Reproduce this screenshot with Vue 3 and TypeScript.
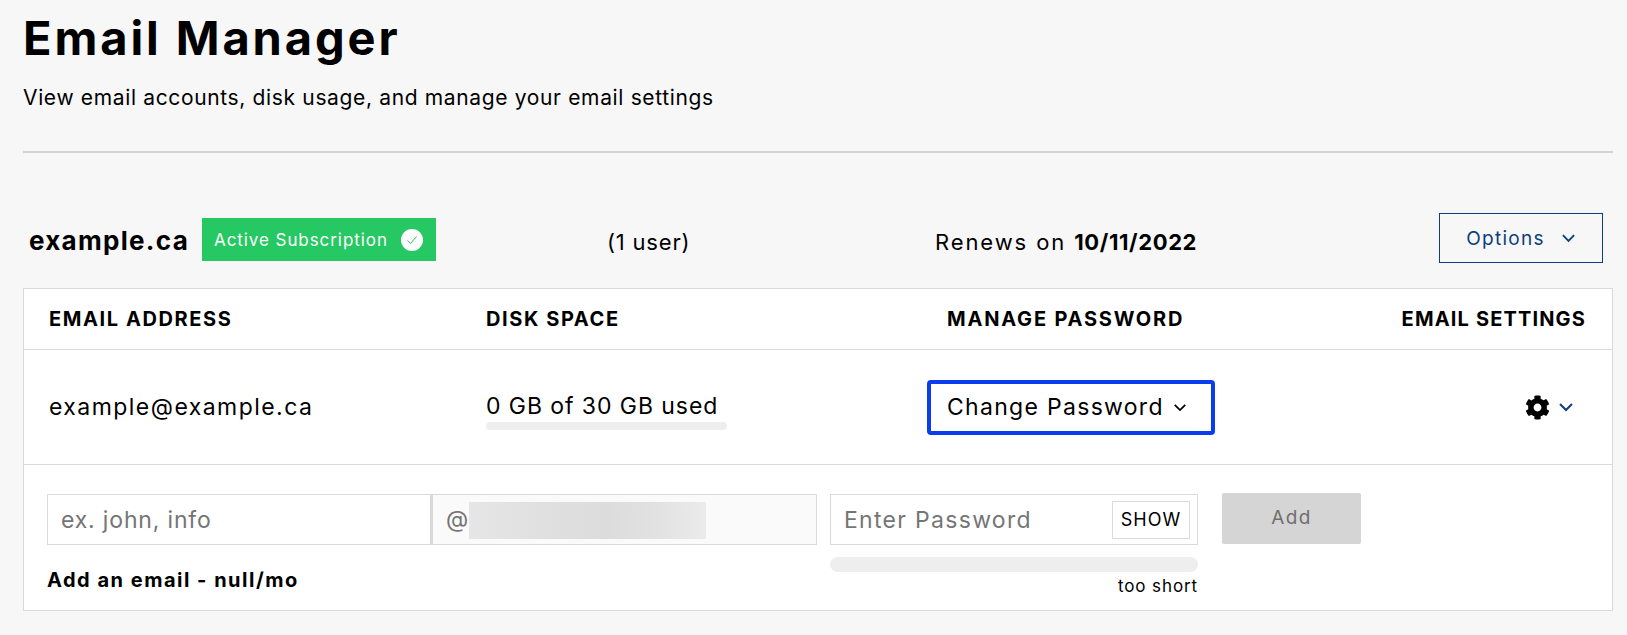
<script setup lang="ts">
const headers: string[] = ['EMAIL ADDRESS', 'DISK SPACE', 'MANAGE PASSWORD', 'EMAIL SETTINGS']
const cogPath =
  'M487.4 315.7l-42.6-24.6c4.3-23.2 4.3-47 0-70.2l42.6-24.6c4.9-2.8 7.1-8.6 5.5-14-11.1-35.6-30-67.8-54.7-94.6-3.8-4.1-10-5.1-14.8-2.3L380.8 110c-17.9-15.4-38.5-27.3-60.8-35.1V25.8c0-5.6-3.9-10.5-9.4-11.7-36.7-8.2-74.3-7.8-109.2 0-5.5 1.2-9.4 6.1-9.4 11.7V75c-22.2 7.9-42.8 19.8-60.8 35.1L88.7 85.5c-4.9-2.8-11-1.9-14.8 2.3-24.7 26.7-43.6 58.9-54.7 94.6-1.7 5.4.6 11.2 5.5 14L67.3 221c-4.3 23.2-4.3 47 0 70.2l-42.6 24.6c-4.9 2.8-7.1 8.6-5.5 14 11.1 35.6 30 67.8 54.7 94.6 3.8 4.1 10 5.1 14.8 2.3l42.6-24.6c17.9 15.4 38.5 27.3 60.8 35.1v49.2c0 5.6 3.9 10.5 9.4 11.7 36.7 8.2 74.3 7.8 109.2 0 5.5-1.2 9.4-6.1 9.4-11.7v-49.2c22.2-7.9 42.8-19.8 60.8-35.1l42.6 24.6c4.9 2.8 11 1.9 14.8-2.3 24.7-26.7 43.6-58.9 54.7-94.6 1.5-5.5-.7-11.3-5.6-14.1zM256 336c-44.1 0-80-35.9-80-80s35.9-80 80-80 80 35.9 80 80-35.9 80-80 80z'
</script>

<template>
  <main class="page">
    <h1 class="title">Email Manager</h1>
    <p class="subtitle">View email accounts, disk usage, and manage your email settings</p>
    <hr class="rule" />

    <section class="summary">
      <div class="domain">
        <strong class="domain-name">example.ca</strong>
        <span class="badge">
          Active Subscription
          <svg class="badge-check" viewBox="0 0 22 22" aria-hidden="true">
            <circle cx="11" cy="11" r="11" fill="#fff" />
            <path d="M6.5 11.5l3 3 6-7" fill="none" stroke="#22c55e" stroke-width="1" />
          </svg>
        </span>
      </div>
      <span class="users">(1 user)</span>
      <span class="renews">Renews on <b>10/11/2022</b></span>
      <button class="options" type="button">
        Options
        <svg class="chev" viewBox="0 0 16 10" aria-hidden="true">
          <path d="M2 2l6 6 6-6" fill="none" stroke="currentColor" stroke-width="2" />
        </svg>
      </button>
    </section>

    <section class="table">
      <div class="grid head">
        <span v-for="h in headers" :key="h" class="th">{{ h }}</span>
      </div>
      <div class="grid row">
        <span class="cell email">example@example.ca</span>
        <div class="usage">
          <span class="cell">0 GB of 30 GB used</span>
          <span class="usage-bar"></span>
        </div>
        <button class="change" type="button">
          Change Password
          <svg class="chev-small" viewBox="0 0 16 10" aria-hidden="true">
            <path d="M2 2l6 6 6-6" fill="none" stroke="currentColor" stroke-width="2" />
          </svg>
        </button>
        <div class="settings">
          <svg class="cog" viewBox="0 0 512 512" aria-hidden="true"><path :d="cogPath" /></svg>
          <svg class="chev-blue" viewBox="0 0 16 10" aria-hidden="true">
            <path d="M2 2l6 6 6-6" fill="none" stroke="currentColor" stroke-width="2" />
          </svg>
        </div>
      </div>
      <div class="add">
        <div class="add-email">
          <div class="address">
            <input class="local" type="text" placeholder="ex. john, info" />
            <div class="at">@<span class="blur"></span></div>
          </div>
          <strong class="add-label">Add an email - null/mo</strong>
        </div>
        <div class="password">
          <div class="pass-box">
            <input class="pass-input" type="text" placeholder="Enter Password" />
            <button class="show" type="button">SHOW</button>
          </div>
          <div class="strength"></div>
          <small class="hint">too short</small>
        </div>
        <button class="add-btn" type="button">Add</button>
      </div>
    </section>
  </main>
</template>

<style>
html, body { margin: 0; background: #f7f7f7; }
</style>

<style scoped>
.page {
  box-sizing: border-box;
  width: 1627px;
  height: 635px;
  overflow: hidden;
  padding: 0 14px 0 23px;
  background: #f7f7f7;
  color: #000;
  font-family: Inter, "Open Sans", sans-serif;
}
.title {
  margin: 0;
  padding-top: 11px;
  height: 63px;
  box-sizing: border-box;
  font-size: 47px;
  line-height: 54px;
  font-weight: 700;
  letter-spacing: 2.9px;
}
.subtitle {
  margin: 22px 0 0;
  font-size: 21px;
  line-height: 26px;
  letter-spacing: 0.65px;
}
.rule {
  margin: 40px 0 0;
  border: 0;
  height: 2px;
  background: #d2d2d2;
}
.summary {
  display: grid;
  grid-template-columns: 585px 327px 1fr auto;
  align-items: center;
  height: 50px;
  margin: 60px 10px 0 0;
}
.domain { display: flex; align-items: center; padding-left: 6px; height: 100%; }
.domain-name { font-size: 26px; font-weight: 700; width: 167px; flex: none; padding-top: 5px; letter-spacing: 1.3px; }
.badge {
  display: flex;
  align-items: center;
  justify-content: space-between;
  box-sizing: border-box;
  width: 234px;
  height: 43px;
  margin: 3px 0 0 6px;
  padding: 0 13px 0 12px;
  background: #25c862;
  color: #fff;
  font-size: 17px;
  letter-spacing: 0.93px;
}
.badge-check { width: 22px; height: 22px; }
.users, .renews { font-size: 22px; padding-top: 8px; }
.users { letter-spacing: 0.8px; margin-left: -1px; }
.renews { letter-spacing: 1.9px; }
.renews b { font-weight: 700; letter-spacing: 0.6px; }
.options {
  display: flex;
  align-items: center;
  justify-content: center;
  gap: 16px;
  box-sizing: border-box;
  width: 164px;
  height: 50px;
  background: transparent;
  border: 1px solid #0f3d7e;
  color: #0f3d7e;
  font: inherit;
  font-size: 19px;
  letter-spacing: 1.3px;
}
.chev { width: 15px; height: 10px; }
.table {
  margin-top: 25px;
  border: 1.5px solid #dadada;
  background: #fff;
  box-sizing: border-box;
  height: 323px;
}
.grid {
  display: grid;
  grid-template-columns: 462px 441px 1fr auto;
  align-items: center;
  padding-right: 26px;
}
.head { height: 61px; border-bottom: 1.5px solid #dadada; box-sizing: border-box; }
.th { font-size: 20px; font-weight: 700; letter-spacing: 1.6px; }
.th:first-child { padding-left: 25px; }
.th:nth-child(3) { padding-left: 20px; letter-spacing: 1.8px; }
.th:nth-child(4) { letter-spacing: 1.15px; }
.row { height: 115px; border-bottom: 1.5px solid #dadada; box-sizing: border-box; }
.cell { font-size: 23px; letter-spacing: 0.93px; }
.row > .email { padding-left: 25px; letter-spacing: 1.45px; }
.usage { display: flex; flex-direction: column; width: 241px; margin-top: 8px; }
.usage-bar { height: 8px; background: #eee; border-radius: 4px; margin-top: 2px; }
.change {
  display: flex;
  align-items: center;
  justify-content: space-between;
  box-sizing: border-box;
  width: 288px;
  height: 55px;
  padding: 0 24px 0 16px;
  background: #fff;
  border: 4px solid #0a3cf0;
  border-radius: 4px;
  font: inherit;
  font-size: 23px;
  letter-spacing: 1.3px;
  color: #000;
}
.chev-small { width: 14px; height: 9px; }
.settings { display: flex; align-items: center; gap: 8px; justify-content: flex-end; padding-right: 12px; }
.cog { width: 25px; height: 25px; }
.chev-blue { width: 16px; height: 10px; color: #0f3d7e; }
.add { display: flex; align-items: flex-start; padding: 29px 0 0 23px; gap: 0; }
.add-email { width: 770px; margin-right: 13px; flex: none; }
.address { display: flex; height: 51px; }
.local {
  box-sizing: border-box;
  width: 384px;
  height: 51px;
  border: 1.5px solid #dadada;
  padding: 0 13px;
  font: inherit;
  font-size: 23px;
  letter-spacing: 0.83px;
  outline: 0;
}
.local::placeholder, .pass-input::placeholder { color: #757575; opacity: 1; }
.at {
  position: relative;
  flex: 1;
  box-sizing: border-box;
  border: 1.5px solid #dadada;
  border-left-width: 2px;
  background: #fafafa;
  padding-left: 13px;
  color: #757575;
  font-size: 23px;
  line-height: 48px;
}
.blur {
  position: absolute;
  left: 36px;
  top: 7px;
  width: 237px;
  height: 37px;
  background: linear-gradient(90deg, #e6e6e6 0%, #e0e0e0 30%, #dcdcdc 58%, #e2e2e2 80%, #ebebeb 100%);
}
.add-label { display: block; margin-top: 22px; font-size: 20px; font-weight: 700; line-height: 26px; letter-spacing: 1.5px; }
.password { width: 368px; margin-right: 24px; flex: none; }
.pass-box {
  display: flex;
  align-items: center;
  justify-content: space-between;
  box-sizing: border-box;
  height: 51px;
  border: 1.5px solid #dadada;
  padding: 0 7px 0 0;
}
.pass-input {
  flex: 1;
  min-width: 0;
  border: 0;
  outline: 0;
  background: transparent;
  padding: 0 0 0 13px;
  font: inherit;
  font-size: 23px;
  letter-spacing: 1.3px;
}
.show {
  box-sizing: border-box;
  width: 78px;
  height: 38px;
  padding: 0;
  background: #fff;
  border: 1.5px solid #dadada;
  font: inherit;
  font-size: 18px;
  letter-spacing: 1px;
  color: #000;
}
.strength { height: 15px; margin-top: 12px; border-radius: 8px; background: #eee; }
.hint { display: block; text-align: right; margin-top: 4px; font-size: 17px; line-height: 20px; letter-spacing: 0.9px; }
.add-btn {
  box-sizing: border-box;
  width: 139px;
  height: 51px;
  margin-top: -1px;
  padding-bottom: 4px;
  border: 0;
  border-radius: 2px;
  background: #d5d5d5;
  color: #6f6f6f;
  font: inherit;
  font-size: 19px;
  letter-spacing: 1.3px;
}
</style>
